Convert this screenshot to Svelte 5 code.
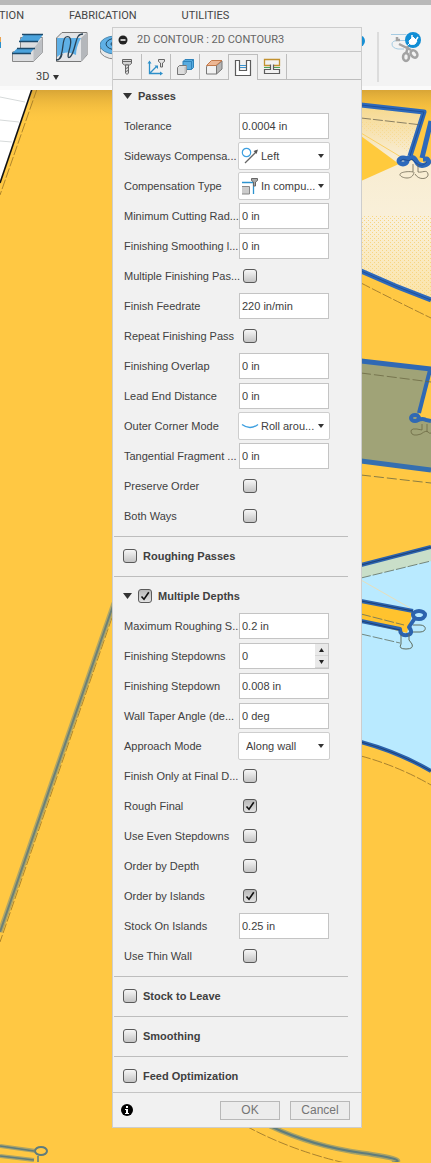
<script>
  const passes = [
    { label: 'Tolerance', kind: 'text', value: '0.0004 in' },
    { label: 'Sideways Compensa...', kind: 'select', icon: 'left', value: 'Left' },
    { label: 'Compensation Type', kind: 'select', icon: 'computer', value: 'In compu...' },
    { label: 'Minimum Cutting Rad...', kind: 'text', value: '0 in' },
    { label: 'Finishing Smoothing l...', kind: 'text', value: '0 in' },
    { label: 'Multiple Finishing Pas...', kind: 'check', value: false },
    { label: 'Finish Feedrate', kind: 'text', value: '220 in/min' },
    { label: 'Repeat Finishing Pass', kind: 'check', value: false },
    { label: 'Finishing Overlap', kind: 'text', value: '0 in' },
    { label: 'Lead End Distance', kind: 'text', value: '0 in' },
    { label: 'Outer Corner Mode', kind: 'select', icon: 'roll', value: 'Roll arou...' },
    { label: 'Tangential Fragment ...', kind: 'text', value: '0 in' },
    { label: 'Preserve Order', kind: 'check', value: false },
    { label: 'Both Ways', kind: 'check', value: false }
  ];
  const depths = [
    { label: 'Maximum Roughing S...', kind: 'text', value: '0.2 in' },
    { label: 'Finishing Stepdowns', kind: 'spin', value: '0' },
    { label: 'Finishing Stepdown', kind: 'text', value: '0.008 in' },
    { label: 'Wall Taper Angle (de...', kind: 'text', value: '0 deg' },
    { label: 'Approach Mode', kind: 'select', value: 'Along wall' },
    { label: 'Finish Only at Final D...', kind: 'check', value: false },
    { label: 'Rough Final', kind: 'check', value: true },
    { label: 'Use Even Stepdowns', kind: 'check', value: false },
    { label: 'Order by Depth', kind: 'check', value: false },
    { label: 'Order by Islands', kind: 'check', value: true },
    { label: 'Stock On Islands', kind: 'text', value: '0.25 in' },
    { label: 'Use Thin Wall', kind: 'check', value: false }
  ];
  const sections = [
    { id: 'passes', title: 'Passes', open: true, rows: passes },
    { id: 'roughing', title: 'Roughing Passes', toggle: true, on: false, rows: [] },
    { id: 'depths', title: 'Multiple Depths', open: true, toggle: true, on: true, rows: depths },
    { id: 'stock', title: 'Stock to Leave', toggle: true, on: false, rows: [] },
    { id: 'smoothing', title: 'Smoothing', toggle: true, on: false, rows: [] },
    { id: 'feed', title: 'Feed Optimization', toggle: true, on: false, rows: [] }
  ];
  const tabs = ['tool', 'geometry', 'heights', 'stock', 'passes', 'linking'];
</script>

{#snippet checkbox(id, on)}
  <span class="check">
    <input type="checkbox" {id} checked={on} />
    <svg viewBox="0 0 14 14"><path d="M3.500 7.500 6 10.200 10.800 3.200" fill="none" stroke="#111" stroke-width="1.600" /></svg>
  </span>
{/snippet}

{#snippet tabIcon(name)}
  <svg class="tab-icon" viewBox="0 0 18 18">
    {#if name === 'tool'}
      <path d="M4.500 1.500h9v4l-2 1.500h-5l-2-1.500z" fill="#d4d4d4" stroke="#666" />
      <path d="M7.500 7h3v8l-1.500 1.500-1.500-1.500z" fill="#ddd" stroke="#666" />
      <path d="M5 3.500h8M8 10.500l2-1M8 13.500l2-1" stroke="#666" />
    {:else if name === 'geometry'}
      <path d="M2.500 5v10.500H14M3 15 9.500 8.500" fill="none" stroke="#2c8fc9" stroke-width="1.300" />
      <path d="M.5 5.500 2.500 2.500l2 3zM13 13.500l3 2-3 2zM7.500 7.500H11V11z" fill="#2c8fc9" />
      <path d="M11.500 1.500h6v2l-2 1.500v4h-2V5l-2-1.500z" fill="#e4e4e4" stroke="#666" />
    {:else if name === 'heights'}
      <path d="M7 3.500 9 1.500h8.500v8l-2 2H7z" fill="#58abdf" stroke="#2f83ba" />
      <path d="M7 3.500h8.500v8M15.500 3.500l2-2" fill="none" stroke="#2f83ba" />
      <path d="M1.500 9.500 3.500 7.500h7v7l-2 2h-7z" fill="#dcdcdc" stroke="#777" />
      <path d="M8.500 9.500l2-2v7l-2 2z" fill="#c0c0c0" />
    {:else if name === 'stock'}
      <path d="M1.500 8.500 3.500 7h8v9h-10z" fill="#f1f1f1" stroke="#777" />
      <path d="M11.500 7.500 17 3v8l-5.500 5z" fill="#b5b5b5" stroke="#777" />
      <path d="M1.500 7.500 6.500 2.500H17l-6 5z" fill="#edb794" stroke="#c27a4c" />
    {:else if name === 'passes'}
      <path d="M1.500 1.500h4v10h7v-10h4v15h-15z" fill="#fff" stroke="#5c5c5c" stroke-width="1.200" />
      <path d="M6 6.500h6M6 8.500h6" stroke="#3c93cf" />
    {:else}
      <path d="M7 7.500H1.500v-6h15v6H11" fill="none" stroke="#c2912f" stroke-width="1.300" />
      <path d="M1 9.500h6M11 9.500h6" stroke="#4aa45a" />
      <path d="M7.500 6.500v5h-6v4h15v-4h-6v-5" fill="none" stroke="#5c5c5c" stroke-width="1.200" />
    {/if}
  </svg>
{/snippet}

{#snippet optionIcon(name)}
  <svg class="option-icon" viewBox="0 0 18 18">
    {#if name === 'left'}
      <circle cx="5.500" cy="5.500" r="4.200" fill="none" stroke="#3d9fe0" stroke-width="1.200" />
      <path d="M4 16 15 5" stroke="#666" stroke-width="1.300" />
      <path d="M17 2.500 15.500 7 12.500 4z" fill="#555" />
    {:else if name === 'computer'}
      <path d="M1 9.500h7.500V17H1" fill="#ccc" stroke="#888" />
      <path d="M1 5.500h11.500V17" fill="none" stroke="#2c93cf" stroke-width="1.300" />
      <path d="M10.500 1.500h6v2l-2 1.500v4h-2V5l-2-1.500z" fill="#aaa" stroke="#666" />
    {:else}
      <path d="M1 7.500Q9 13.500 17 7.500" fill="none" stroke="#3d9fe0" stroke-width="1.400" />
    {/if}
  </svg>
{/snippet}

<div class="page">
  <svg class="scene" viewBox="0 0 431 1163" preserveAspectRatio="xMinYMin slice" aria-hidden="true">
    <defs>
      <linearGradient id="shade" x1="0" y1="0" x2="0" y2="1">
        <stop offset="0" stop-color="#d8a536" />
        <stop offset="1" stop-color="#ffc843" stop-opacity="0" />
      </linearGradient>
      <linearGradient id="cream" x1="0" y1="0" x2="0" y2="1">
        <stop offset="0" stop-color="#f6d88c" />
        <stop offset=".25" stop-color="#f8ecd0" />
        <stop offset=".6" stop-color="#f9f0da" />
        <stop offset="1" stop-color="#fbe3a6" />
      </linearGradient>
      <pattern id="dots" width="4" height="4" patternUnits="userSpaceOnUse">
        <path d="M0 0h1v1H0zM2 2h1v1H2z" fill="#f7d581" />
      </pattern>
    </defs>
    <rect width="431" height="1163" fill="#ffc843" />
    <rect x="30" y="90" width="401" height="34" fill="url(#shade)" />
    <path d="M0 88h33L0 183z" fill="#fff" />
    <path d="M0 97l25 5M0 120l19 2M0 141l12 1" stroke="#d6dada" fill="none" />
    <path d="M32 89 0 183" stroke="#111" stroke-width="1.600" />
    <g fill="none" stroke="#9a7424" stroke-width=".8" stroke-dasharray="10 2">
      <path d="M37 89 0 195" />
      <path d="M116 606 0 942" />
    </g>
    <path d="M114 603 0 932" stroke="#b0a667" stroke-width="5" />
    <path d="M114 603 0 932" stroke="#6b8078" stroke-width="2" />

    <!-- upper pocket -->
    <path d="M361 105 424 112 410 160l21 4v136l-70-30z" fill="url(#cream)" />
    <path d="M361 215h70v84l-70-28z" fill="url(#dots)" />
    <path d="M361 121l56 6-8 25-48-24z" fill="url(#dots)" opacity=".6" />
    <path d="M361 136 399 164 361 181z" fill="#ffca3d" />
    <path d="M361 133 401 157" stroke="#fbd064" fill="none" />
    <g fill="none" stroke="#2d69bb" stroke-width="5" stroke-linejoin="round">
      <path d="M361 105 424 112 410 156" />
      <path d="M431 121 422 158" />
      <path d="M361 271Q396 287 431 300" />
      <ellipse cx="403" cy="161" rx="4" ry="3" />
      <path d="M406 159q7-4 10 2t9 4 2-6h-4" />
    </g>
    <path d="M361 105 424 112 410 156M361 271Q396 287 431 300M400 161q3-3 6-1t6-1l4 4q6 5 11-1" fill="none" stroke="#215096" />
    <g fill="none" stroke="#6d6753" stroke-width=".8">
      <path d="M361 118 422 125" stroke-dasharray="10 2" />
      <path d="M413 164v8c-4-1-14 0-13 3s13 6 14-3M418 164v8c4 1 9-3 10 2s-9 7-13 0" />
      <path d="M361 283Q398 302 431 318" stroke-dasharray="10 2" stroke="#93702a" />
    </g>

    <!-- middle pocket -->
    <path d="M361 361 431 369 418 418l13 4v47l-70-9z" fill="#a0a377" />
    <path d="M431 376 421 414l10 3z" fill="#ffc843" />
    <g fill="none" stroke="#3069b4" stroke-width="4">
      <path d="M361 361 431 369" stroke-width="5" />
      <path d="M430 370 419 413" />
      <path d="M361 461 431 470" stroke="#356fb0" stroke-width="5" />
      <ellipse cx="415" cy="418" rx="4" ry="3" />
      <path d="M417 420q7-2 9 0l5 1" />
    </g>
    <g fill="none" stroke="#6c6a44" stroke-width=".8">
      <path d="M361 373 431 382M361 475 431 483" stroke-dasharray="10 3" />
      <path d="M422 424v6q-12-3-11 2t10 2q5-4 7-2t3 1M427 424v8" />
    </g>

    <!-- lower pocket -->
    <path d="M361 565 431 547v224Q398 750 361 742z" fill="#b9eaff" />
    <path d="M361 565 431 547v14L361 578z" fill="#c9dfc9" />
    <path d="M361 580 410 608" stroke="#e8dfbb" fill="none" />
    <path d="M361 600 413 611 407 633 361 622z" fill="#ffc32e" />
    <g fill="none" stroke="#2c63ad" stroke-width="4" stroke-linejoin="round">
      <path d="M361 565 431 547" />
      <path d="M361 601 413 611" />
      <ellipse cx="419" cy="615" rx="6" ry="4" />
      <path d="M415 618 409 627q5 7-2 8t-7-6L361 621" />
      <path d="M361 742Q398 752 431 771" />
    </g>
    <path d="M361 565 431 547M361 742Q398 752 431 771M361 601 413 611M361 621 400 630" fill="none" stroke="#1d4176" />
    <g fill="none" stroke="#5f6d5f" stroke-width=".8">
      <path d="M361 578 431 561M361 614 404 625M361 634 400 643" stroke-dasharray="10 2" />
      <path d="M401 635v9q-3 5 5 5t6-5l-3-4v-6M413 625h7c7 0 7 7 0 7h-7" stroke-width="1" />
      <path d="M361 756Q398 766 431 785" stroke="#93702a" stroke-dasharray="10 2" />
    </g>

    <!-- bottom edges -->
    <g fill="none">
      <path d="M270 1126Q312 1146 362 1153T392 1163" stroke="#a8a267" stroke-width="5" />
      <path d="M270 1126Q312 1146 362 1153T392 1163" stroke="#5f7c7c" stroke-width="2" />
      <path d="M246 1126Q290 1150 345 1163" stroke="#93702a" stroke-width=".8" stroke-dasharray="10 2" />
      <path d="M0 1146 36 1151M0 1156l34 4" stroke="#aaa368" stroke-width="4" />
      <path d="M0 1146 34 1151M0 1156l34 4M38 1156v7" stroke="#5f7c7c" stroke-width="1.500" />
      <ellipse cx="41" cy="1151" rx="6" ry="4" stroke="#5f7c7c" stroke-width="2" />
    </g>
  </svg>

  <header class="toolbar">
    <nav class="workspaces">
      <a href="#construction">CTION</a>
      <a href="#fabrication">FABRICATION</a>
      <a href="#utilities">UTILITIES</a>
    </nav>
    <div class="tools">
      <svg class="sliver" viewBox="0 0 12 32" aria-hidden="true"><path d="M0 5v6" stroke="#e8a252" stroke-width="2" /><path d="M0 10v6" stroke="#2a8fca" stroke-width="2" /></svg>
      <button aria-label="Parallel">
        <svg viewBox="0 0 32 32">
          <path d="M8.500 5.500h22v15l-9 9h-21V20l8-2z" fill="#dcdddf" stroke="#888" />
          <path d="M21.500 16.500l9-11v15l-9 9z" fill="#bdc0c4" />
          <path d="M12 2.500h19l-5 7H7zM5 16.500h17l-4 5H0z" fill="#4ba3dc" />
          <path d="M10 2.500h21M7 9.500h19M5 16.500h18M0 21.500h19" stroke="#1c4a6b" stroke-width="1.400" />
        </svg>
      </button>
      <button aria-label="Contour">
        <svg viewBox="0 0 32 32">
          <path d="M.500 6 6 .500h25V23l-6 6.500H.500z" fill="#e3e4e6" stroke="#777" />
          <path d="M25 6 31 .500V23l-6 6.500z" fill="#b4b7bb" />
          <path d="M1 6h24q-5 9-5 17-10-6-19 2z" fill="#5fb0e6" />
          <path d="M2 28C9 23 5 7 10 5s6 4 3 14 2 8 5-2 3-15 9-15M0 28q5 0 6-6" fill="none" stroke="#2a4254" stroke-width="1.300" />
        </svg>
      </button>
      <button aria-label="Scallop">
        <svg viewBox="0 0 32 32">
          <ellipse cx="15" cy="18" rx="15" ry="9" fill="#e8e8e8" stroke="#888" />
          <ellipse cx="15" cy="13" rx="15" ry="9" fill="#5fb0e6" stroke="#4a88b0" />
          <ellipse cx="17" cy="12" rx="11" ry="6" fill="none" stroke="#1f4865" />
          <ellipse cx="17" cy="12" rx="6" ry="3" fill="none" stroke="#1f4865" />
        </svg>
      </button>
      <div class="extra">
        <svg class="dot" viewBox="0 0 12 32" aria-hidden="true"><circle cx="6" cy="9" r="6" fill="#178fd4" /></svg>
        <span class="divider"></span>
        <button aria-label="Trim">
          <svg viewBox="0 0 32 32">
            <path d="M0 2.500h15M6 8.500h9M13 17H7q-6-1-6-5 0-3 5-3.500" fill="none" stroke="#a5cbe2" />
            <path d="M6 5v3h3M8 12l12 6M17 14l-2 8" fill="none" stroke="#a3a3a3" stroke-width="2.500" />
            <ellipse cx="15" cy="25" rx="3" ry="4" fill="none" stroke="#a3a3a3" stroke-width="2.500" />
            <ellipse cx="23" cy="22" rx="3" ry="4" transform="rotate(-40 23 22)" fill="none" stroke="#a3a3a3" stroke-width="2.500" />
            <circle cx="22" cy="8" r="8" fill="#118ed5" />
            <path d="M18 9l4-4 4 4-2 3q-3 1-5 0zM16.500 13.500 19 11" fill="#fff" stroke="#fff" />
            <path d="M21 6V3M25 8l2-3" stroke="#fff" stroke-width="1.500" />
          </svg>
        </button>
      </div>
    </div>
    <button class="group">3D <svg viewBox="0 0 6 5"><path d="M0 0h6L3 5z" fill="#333" /></svg></button>
  </header>

  <section class="dialog" aria-label="2D CONTOUR : 2D CONTOUR3">
    <div class="title">
      <svg viewBox="0 0 10 10" aria-hidden="true"><circle cx="5" cy="5" r="4.500" fill="#222" /><path d="M2.500 5h5" stroke="#fff" stroke-width="1.500" /></svg>
      <h1>2D CONTOUR : 2D CONTOUR3</h1>
    </div>
    <div class="tabs">
      {#each tabs as tab}
        <button class:active={tab === 'passes'} aria-label={tab}>{@render tabIcon(tab)}</button>
      {/each}
      <span class="rest"></span>
    </div>

    <form class="body" onsubmit={(e) => e.preventDefault()}>
      {#each sections as s}
        <div class="section">
          <div class="head">
            {#if s.open}<svg class="caret" viewBox="0 0 9 6" aria-hidden="true"><path d="M0 0h9L4.500 6z" fill="#333" /></svg>{/if}
            {#if s.toggle}
              {@render checkbox(s.id, s.on)}
              <label for={s.id}>{s.title}</label>
            {:else}
              <h2>{s.title}</h2>
            {/if}
          </div>
          {#each s.rows as r, i}
            {@const id = `${s.id}-${i}`}
            <div class="row">
              <label for={id}>{r.label}</label>
              {#if r.kind === 'check'}
                {@render checkbox(id, r.value)}
              {:else if r.kind === 'select'}
                <span class="picker" class:pictured={r.icon}>
                  <select {id}><option>{r.value}</option></select>
                  {#if r.icon}{@render optionIcon(r.icon)}{/if}
                  <svg class="drop" viewBox="0 0 6 4" aria-hidden="true"><path d="M0 0h6L3 4z" /></svg>
                </span>
              {:else if r.kind === 'spin'}
                <span class="spin">
                  <input type="text" {id} value={r.value} />
                  <span class="steps">
                    <button type="button" aria-label="Increase"><svg viewBox="0 0 5 4"><path d="M0 4h5L2.500 0z" /></svg></button>
                    <button type="button" aria-label="Decrease"><svg viewBox="0 0 5 4"><path d="M0 0h5L2.500 4z" /></svg></button>
                  </span>
                </span>
              {:else}
                <input class="field" type="text" {id} value={r.value} />
              {/if}
            </div>
          {/each}
        </div>
      {/each}
    </form>

    <footer>
      <svg viewBox="0 0 12 12" aria-hidden="true"><circle cx="6" cy="6" r="6" fill="#000" /><path d="M5 2h2v2H5zM4 5h3v4h1v1H4V9h1V6H4z" fill="#fff" /></svg>
      <button>OK</button>
      <button>Cancel</button>
    </footer>
  </section>
</div>

<style>
  :global(body) { margin: 0; background: #ffc843; }
  .page {
    position: relative;
    display: grid;
    overflow: hidden;
    font: 11px/14px "Liberation Sans", Arial, sans-serif;
    color: #404040;
  }
  .page * { box-sizing: border-box; }
  svg { display: block; }
  button, input, select { font: inherit; color: inherit; }
  button { margin: 0; padding: 0; border: 0; background: none; }
  .scene { position: absolute; inset: 0; width: 100%; height: 100%; }

  .toolbar {
    position: relative;
    grid-area: 1 / 1;
    align-self: start;
    min-width: 0;
    border-top: 5px solid #b9b9b9;
    border-bottom: 4px solid #fafafa;
    background: #f3f3f3;
    overflow: hidden;
  }
  .workspaces {
    display: flex;
    gap: 45px;
    margin-left: -8px;
    padding: 4px 0 9px;
    font-family: Roboto, sans-serif;
  }
  .workspaces a { color: #444; text-decoration: none; }
  .tools { display: flex; gap: 12px; height: 32px; }
  .tools button, .tools button svg { width: 32px; height: 32px; }
  .tools .sliver { width: 12px; height: 32px; margin-right: -12px; }
  .extra { display: flex; margin-left: auto; gap: 12px; padding-right: 8px; }
  .dot { width: 12px; height: 32px; }
  .divider { width: 2px; height: 50px; background: #dcdcdc; }
  .group {
    display: flex;
    align-items: center;
    gap: 4px;
    margin-left: 36px;
    padding: 6px 0 2px;
    font-family: Roboto, sans-serif;
  }
  .group svg { width: 6px; height: 5px; }

  .dialog {
    position: relative;
    grid-area: 1 / 1;
    justify-self: start;
    width: 250px;
    margin: 27px 0 34px 112px;
    border: 1px solid #cdcdcd;
    background: #f1f1f1;
  }
  .title { display: flex; align-items: center; gap: 9px; height: 24px; padding-left: 5px; border-bottom: 1px solid #c6c6c6; }
  .title svg { width: 10px; height: 10px; }
  .title h1 { margin: 0; font: 11px/14px Roboto, sans-serif; color: #666; }
  .tabs { display: flex; height: 28px; padding-top: 2px; }
  .tabs button {
    display: grid;
    place-items: center;
    width: 29px;
    border: solid #bdbdbd;
    border-width: 0 1px 1px 0;
  }
  .tabs button.active { border-width: 1px 1px 0 0; }
  .rest { flex: 1; border-bottom: 1px solid #bdbdbd; }
  .tab-icon { width: 18px; height: 18px; }

  .section { margin: 0 13px 0 1px; padding: 4px 0 5px; border-bottom: 1px solid #bdbdbd; }
  .section:first-child { padding-top: 1px; }
  .section:last-child { padding-bottom: 1px; border-bottom: 0; }
  .head { display: flex; align-items: center; gap: 6px; height: 30px; padding-left: 9px; font-weight: bold; }
  .head h2 { margin: 0; font: inherit; }
  .caret { width: 9px; height: 6px; }
  .row {
    display: grid;
    grid-template-columns: 114px 92px;
    align-items: center;
    height: 30px;
    padding-left: 10px;
  }
  .row label { white-space: nowrap; }

  .field, .spin { width: 90px; height: 26px; margin: 0 1px; border: 1px solid #c4c4c4; background: #fff; }
  .field { padding: 0 2px; }
  .spin { display: flex; }
  .spin input { flex: 1; min-width: 0; padding: 0 2px; border: 0; background: none; }
  .steps { display: grid; width: 13px; background: #e9e9e9; }
  .steps button { display: grid; place-items: center; border-bottom: 1px solid #d6d6d6; }
  .steps svg { width: 5px; height: 4px; fill: #222; }

  .picker { display: grid; align-items: center; }
  .picker > * { grid-area: 1 / 1; }
  .picker select {
    appearance: none;
    width: 92px;
    height: 28px;
    padding: 0 0 0 7px;
    border: 1px solid #cecece;
    border-radius: 2px;
    background: #fff;
  }
  .picker.pictured select { padding-left: 22px; }
  .option-icon { width: 18px; height: 18px; margin-left: 3px; pointer-events: none; }
  .drop { width: 6px; height: 4px; justify-self: end; margin-right: 6px; fill: #333; pointer-events: none; }

  .check { display: grid; width: 14px; height: 14px; }
  .check > * { grid-area: 1 / 1; width: 14px; height: 14px; }
  .row .check { margin-left: 5px; }
  .check input {
    appearance: none;
    margin: 0;
    border: 1px solid #5a5a5a;
    border-radius: 3px;
    background: linear-gradient(#f6f6f6, #c4c4c4);
  }
  .check svg { display: none; pointer-events: none; }
  .check input:checked { background: linear-gradient(#b9b9b9, #e2e2e2); }
  .check input:checked + svg { display: block; }

  footer { display: flex; align-items: center; gap: 10px; height: 35px; padding: 0 11px 0 8px; border-top: 1px solid #c4c4c4; }
  footer svg { width: 12px; height: 12px; margin-right: auto; }
  footer button {
    width: 60px;
    height: 19px;
    border: 1px solid #b8b8b8;
    background: #ececec;
    color: #757575;
    font-size: 12px;
  }
</style>
